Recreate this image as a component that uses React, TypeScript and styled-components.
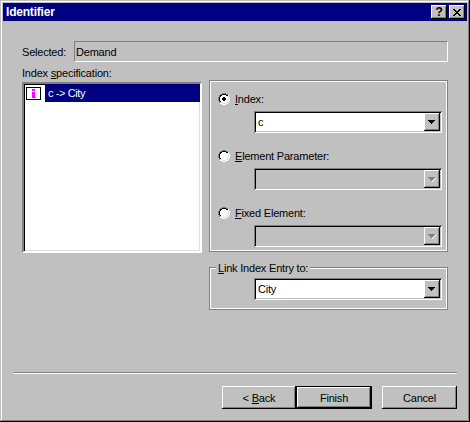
import React from 'react';
import styled, { createGlobalStyle } from 'styled-components';

const GlobalStyle = createGlobalStyle`
  html, body {
    margin: 0;
    padding: 0;
    background: #c0c0c0;
  }
  * {
    box-sizing: border-box;
  }
`;

const RADIO_MAP = [
  '....GGGG....',
  '..GGKKKKGG..',
  '.GKKWWWWKKW.',
  '.GKWWWWWWLW.',
  'GKWWWWWWWWLW',
  'GKWWWWWWWWLW',
  'GKWWWWWWWWLW',
  'GKWWWWWWWWLW',
  '.GKWWWWWWLW.',
  '.GLLWWWWLLW.',
  '..WWLLLLWW..',
  '....WWWW....',
];

const RADIO_COLORS: Record<string, string> = {
  G: '#808080',
  K: '#000000',
  W: '#ffffff',
  L: '#dfdfdf',
};

function RadioIcon({ checked }: { checked?: boolean }) {
  return (
    <svg width="12" height="12" viewBox="0 0 12 12" shapeRendering="crispEdges">
      {RADIO_MAP.map((row, y) =>
        row.split('').map((c, x) =>
          c === '.' ? null : <rect key={`${x}-${y}`} x={x} y={y} width="1" height="1" fill={RADIO_COLORS[c]} />
        )
      )}
      {checked && <path d="M5 4h2v1h1v2h-1v1h-2v-1h-1v-2h1z" fill="#000" />}
    </svg>
  );
}

function IndexIcon() {
  return (
    <svg width="15" height="13" viewBox="0 0 15 13" shapeRendering="crispEdges">
      <rect x="0.5" y="0.5" width="14" height="12" fill="#fff" stroke="#000" />
      <path d="M6 2h3v2h-3zM6 5h3v5h1v1h-4z" fill="#ff00ff" />
    </svg>
  );
}

function CloseIcon() {
  return (
    <svg width="8" height="7" viewBox="0 0 8 7" shapeRendering="crispEdges">
      <path d="M0 0h2v1h1v1h2v-1h1v-1h2v1h-1v1h-1v1h-1v1h1v1h1v1h1v1h-2v-1h-1v-1h-2v1h-1v1h-2v-1h1v-1h1v-1h1v-1h-1v-1h-1v-1h-1z" fill="#000" />
    </svg>
  );
}

function ArrowIcon({ disabled }: { disabled?: boolean }) {
  return (
    <svg width="8" height="5" viewBox="0 0 8 5" shapeRendering="crispEdges">
      {disabled && <path d="M7 1h1v1h-1v1h-1v1h-1v1h-1v-1h1v-1h1v-1h1z" fill="#fff" />}
      <path d="M0 0h7v1h-1v1h-1v1h-1v1h-1v-1h-1v-1h-1v-1h-1z" fill={disabled ? '#808080' : '#000'} />
    </svg>
  );
}

function Combo({ value, disabled }: { value?: string; disabled?: boolean }) {
  return (
    <ComboBox $disabled={disabled}>
      <ComboValue>{value}</ComboValue>
      <ComboArrow>
        <ArrowIcon disabled={disabled} />
      </ComboArrow>
    </ComboBox>
  );
}

function RadioField({ hotkey, rest, checked, value, disabled }: {
  hotkey: string;
  rest: string;
  checked?: boolean;
  value?: string;
  disabled?: boolean;
}) {
  return (
    <Field>
      <RadioRow>
        <RadioIcon checked={checked} />
        <RadioLabel>
          <Hotkey>{hotkey}</Hotkey>
          {rest}
        </RadioLabel>
      </RadioRow>
      <Combo value={value} disabled={disabled} />
    </Field>
  );
}

export default function App() {
  return (
    <>
      <GlobalStyle />
      <Window>
        <TitleBar>
          <TitleText>Identifier</TitleText>
          <TitleButtons>
            <TitleButton>?</TitleButton>
            <TitleButton>
              <CloseIcon />
            </TitleButton>
          </TitleButtons>
        </TitleBar>
        <Content>
          <SelectedRow>
            <SelectedLabel>Selected:</SelectedLabel>
            <SelectedValue>Demand</SelectedValue>
          </SelectedRow>
          <Columns>
            <LeftColumn>
              <ColumnLabel>
                Index <Hotkey>s</Hotkey>pecification:
              </ColumnLabel>
              <IndexList>
                <IndexRow>
                  <IconSlot>
                    <IndexIcon />
                  </IconSlot>
                  <IndexRowText>{'c -> City'}</IndexRowText>
                </IndexRow>
              </IndexList>
            </LeftColumn>
            <RightColumn>
              <SourceGroup>
                <RadioField hotkey="I" rest="ndex:" checked value="c" />
                <RadioField hotkey="E" rest="lement Parameter:" disabled />
                <RadioField hotkey="F" rest="ixed Element:" disabled />
              </SourceGroup>
              <LinkGroup>
                <GroupLegend>
                  <Hotkey>L</Hotkey>ink Index Entry to:
                </GroupLegend>
                <Combo value="City" />
              </LinkGroup>
            </RightColumn>
          </Columns>
        </Content>
        <Footer>
          <Separator />
          <ButtonRow>
            <WizardButtons>
              <PushButton $width={74}>
                {'< '}
                <Hotkey>B</Hotkey>ack
              </PushButton>
              <PushButton $width={76} $default>Finish</PushButton>
            </WizardButtons>
            <PushButton $width={75}>Cancel</PushButton>
          </ButtonRow>
        </Footer>
      </Window>
    </>
  );
}

const Window = styled.div`
  width: 470px;
  height: 422px;
  padding: 3px;
  display: flex;
  flex-direction: column;
  background: #c0c0c0;
  color: #000;
  font-family: 'Liberation Sans', Arial, sans-serif;
  font-size: 11px;
  letter-spacing: -0.2px;
  box-shadow: inset -1px -1px 0 #000, inset 1px 1px 0 #c0c0c0, inset -2px -2px 0 #808080, inset 2px 2px 0 #fff;
`;

const TitleBar = styled.div`
  height: 18px;
  flex: none;
  display: flex;
  align-items: center;
  justify-content: space-between;
  padding: 0 2px 0 3px;
  background: #000080;
`;

const TitleText = styled.span`
  color: #fff;
  font-weight: bold;
  font-size: 12px;
`;

const TitleButtons = styled.div`
  display: flex;
  gap: 2px;
`;

const TitleButton = styled.div`
  width: 16px;
  height: 14px;
  display: flex;
  align-items: center;
  justify-content: center;
  background: #c0c0c0;
  font-weight: bold;
  font-size: 12px;
  box-shadow: inset -1px -1px 0 #000, inset 1px 1px 0 #fff, inset -2px -2px 0 #808080;
`;

const Content = styled.div`
  padding: 20px 19px 0 19px;
`;

const SelectedRow = styled.div`
  display: flex;
  align-items: center;
  height: 21px;
`;

const SelectedLabel = styled.span`
  width: 52px;
  flex: none;
`;

const SelectedValue = styled.div`
  flex: 1;
  height: 21px;
  display: flex;
  align-items: center;
  padding-left: 1px;
  border: 1px solid;
  border-color: #808080 #fff #fff #808080;
`;

const Columns = styled.div`
  display: flex;
  align-items: flex-start;
  gap: 7px;
  margin-top: 4px;
`;

const LeftColumn = styled.div`
  width: 180px;
  flex: none;
`;

const ColumnLabel = styled.div`
  height: 16px;
  line-height: 14px;
`;

const IndexList = styled.div`
  height: 171px;
  background: #fff;
  border: 2px solid;
  border-color: #808080 #fff #fff #808080;
  box-shadow: inset 1px 1px 0 #000, inset -1px -1px 0 #dfdfdf;
`;

const IndexRow = styled.div`
  display: flex;
  height: 18px;
`;

const IconSlot = styled.div`
  width: 21px;
  flex: none;
  padding: 3px 0 0 2px;
`;

const IndexRowText = styled.div`
  flex: 1;
  display: flex;
  align-items: center;
  padding-left: 3px;
  background: #000080;
  color: #fff;
  letter-spacing: -0.4px;
`;

const RightColumn = styled.div`
  width: 239px;
  flex: none;
  margin-top: 14px;
  display: flex;
  flex-direction: column;
  gap: 15px;
`;

const SourceGroup = styled.div`
  height: 172px;
  padding: 11px 6px 0 8px;
  display: flex;
  flex-direction: column;
  gap: 16px;
  border: 1px solid #808080;
  box-shadow: inset 0 0 0 1px #fff;
`;

const LinkGroup = styled.div`
  position: relative;
  height: 43px;
  padding: 10px 6px 0 8px;
  display: flex;
  flex-direction: column;
  border: 1px solid #808080;
  box-shadow: inset 0 0 0 1px #fff;
`;

const GroupLegend = styled.span`
  position: absolute;
  top: -7px;
  left: 6px;
  padding: 0 2px;
  line-height: 14px;
  background: #c0c0c0;
`;

const Field = styled.div`
  display: flex;
  flex-direction: column;
  gap: 5px;
`;

const RadioRow = styled.div`
  height: 14px;
  display: flex;
  align-items: center;
  gap: 5px;
`;

const RadioLabel = styled.span`
  line-height: 14px;
`;

const Hotkey = styled.span`
  text-decoration: underline;
`;

const ComboBox = styled.div<{ $disabled?: boolean }>`
  width: 188px;
  height: 22px;
  margin-left: 36px;
  flex: none;
  display: flex;
  padding: 2px;
  background: ${(p) => (p.$disabled ? '#c0c0c0' : '#fff')};
  box-shadow: inset 1px 1px 0 #808080, inset -1px -1px 0 #fff, inset 2px 2px 0 #000, inset -2px -2px 0 #c0c0c0;
`;

const ComboValue = styled.div`
  flex: 1;
  display: flex;
  align-items: center;
  padding-left: 2px;
`;

const ComboArrow = styled.div`
  width: 16px;
  flex: none;
  display: flex;
  align-items: center;
  justify-content: center;
  background: #c0c0c0;
  box-shadow: inset -1px -1px 0 #000, inset 1px 1px 0 #fff, inset -2px -2px 0 #808080;
`;

const Footer = styled.div`
  margin-top: auto;
  padding: 0 10px 10px 11px;
`;

const Separator = styled.div`
  height: 2px;
  background: #808080;
  border-bottom: 1px solid #fff;
`;

const ButtonRow = styled.div`
  margin-top: 12px;
  display: flex;
  justify-content: flex-end;
  gap: 10px;
`;

const WizardButtons = styled.div`
  display: flex;
`;

const PushButton = styled.div<{ $width: number; $default?: boolean }>`
  width: ${(p) => p.$width}px;
  height: 23px;
  display: flex;
  align-items: center;
  justify-content: center;
  white-space: pre;
  background: #c0c0c0;
  box-shadow: inset -1px -1px 0 #000, inset 1px 1px 0 #fff, inset -2px -2px 0 #808080;
  border: ${(p) => (p.$default ? '1px solid #000' : 'none')};
`;
